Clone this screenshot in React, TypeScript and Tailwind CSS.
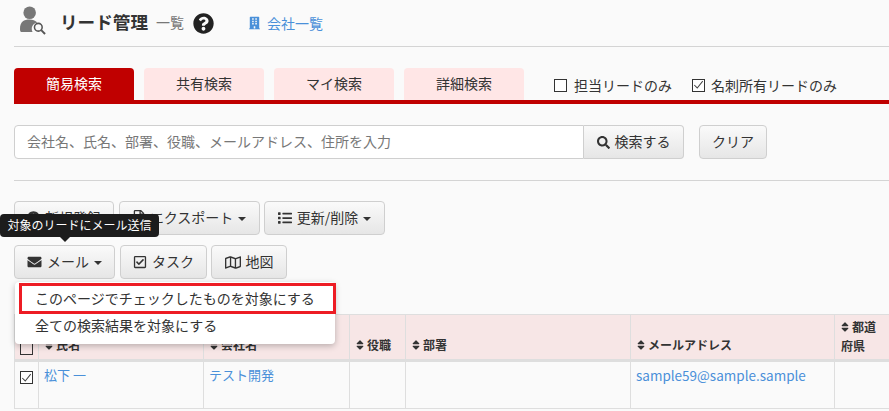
import { FaBuilding, FaEnvelope, FaList, FaQuestionCircle, FaRegCheckSquare, FaRegFileAlt, FaRegMap, FaSearch, FaSort, FaUserCircle } from "react-icons/fa";
import type { ReactNode } from "react";

const font = "font-['Noto_Sans_CJK_JP','Noto_Sans_CJK_SC',sans-serif]";

function Btn({ className = "", children }: { className?: string; children: ReactNode }) {
  return (
    <button className={`h-[34px] flex items-center justify-center gap-[5px] pb-[2px] rounded border border-[#cfcfcf] bg-gradient-to-b from-[#fafafa] to-[#e6e6e6] text-sm text-[#333] ${className}`}>
      {children}
    </button>
  );
}

function Caret() {
  return <span className="mt-[3px] border-x-4 border-x-transparent border-t-4 border-t-[#333]" />;
}

function Check({ checked }: { checked?: boolean }) {
  return (
    <span className="w-[13px] h-[13px] border border-[#333] bg-white flex items-center justify-center shrink-0">
      {checked && (
        <svg viewBox="0 0 13 13" className="w-[12px] h-[12px]">
          <path d="M1.5 6.5 L5 10 L11.5 2" fill="none" stroke="#444" strokeWidth="1.2" />
        </svg>
      )}
    </span>
  );
}

function Tab({ label, active }: { label: string; active?: boolean }) {
  return (
    <div className={`w-[120px] h-[32px] pb-[2px] rounded-t flex items-center justify-center text-sm ${active ? "bg-[#c00000] text-white" : "bg-[#ffe6e6] text-[#333]"}`}>
      {label}
    </div>
  );
}

function Sortable({ label }: { label: string }) {
  return (
    <span className="inline-flex items-center gap-[3px]">
      <FaSort className="w-[8px] h-[12px] text-[#333]" />
      {label}
    </span>
  );
}

const th = "border border-[#dedede] border-b-[3px] pl-[6px] pr-[2px] pb-[4px] text-left";

export default function App() {
  return (
    <div className={`w-[889px] h-[411px] overflow-hidden bg-[#fafafa] pl-[14px] ${font}`}>
      <div className="w-[875px]">
        <div className="h-[47px] flex items-center border-b border-[#d4d4d4]">
          <svg viewBox="0 0 28 30" className="w-[27px] h-[29px] ml-[6px] mt-[-6px]">
            <circle cx="10" cy="7" r="6.5" fill="#777" />
            <path d="M0 24 C0 16 4 14 10 14 C13 14 16 15 18 17 C13 18 11 22 13 27 L2 27 Q0 27 0 24 Z" fill="#777" />
            <circle cx="19" cy="22" r="4" fill="none" stroke="#555" strokeWidth="1.6" />
            <path d="M22 25 L26 29" stroke="#555" strokeWidth="2" />
          </svg>
          <span className="ml-[13px] text-[17.6px] font-bold text-[#333] pb-[2px]">リード管理</span>
          <span className="ml-[8px] text-[14px] text-[#777] pb-[1px]">一覧</span>
          <FaQuestionCircle className="ml-[9px] w-[21px] h-[21px] text-[#222]" />
          <FaBuilding className="ml-[35px] w-[11px] h-[14px] text-[#4a90d9]" />
          <span className="ml-[7px] text-sm text-[#4a90d9] pb-[1px]">会社一覧</span>
        </div>

        <div className="mt-[21px] h-[36px] flex border-b-4 border-[#c00000]">
          <div className="flex gap-[10px]">
            <Tab label="簡易検索" active />
            <Tab label="共有検索" />
            <Tab label="マイ検索" />
            <Tab label="詳細検索" />
          </div>
          <div className="flex items-center h-[32px] ml-[30px] text-sm text-[#333] pt-[2px]">
            <Check />
            <span className="ml-[7px]">担当リードのみ</span>
            <span className="ml-[20px]"><Check checked /></span>
            <span className="ml-[6px]">名刺所有リードのみ</span>
          </div>
        </div>

        <div className="mt-[21px] flex">
          <div className="w-[570px] h-[34px] flex items-center rounded-l border border-[#cfcfcf] bg-white pl-[12px] pb-[2px] text-sm text-[#777]">
            会社名、氏名、部署、役職、メールアドレス、住所を入力
          </div>
          <Btn className="w-[100px] rounded-l-none border-l-0">
            <FaSearch className="w-[13px] h-[13px] text-[#333] mt-[2px]" />
            検索する
          </Btn>
          <Btn className="w-[68px] ml-[15px]">クリア</Btn>
        </div>

        <div className="mt-[21px] border-t border-[#d4d4d4]" />

        <div className="mt-[20px] flex gap-[5px]">
          <Btn className="w-[100px]">
            <FaUserCircle className="w-[13px] h-[13px]" />
            新規登録
          </Btn>
          <Btn className="w-[141px]">
            <FaRegFileAlt className="w-[12px] h-[14px]" />
            エクスポート
            <Caret />
          </Btn>
          <Btn className="w-[121px] ml-[-1px]">
            <FaList className="w-[14px] h-[14px] mt-[2px]" />
            更新/削除
            <Caret />
          </Btn>
        </div>

        <div className="relative mt-[10px] flex gap-[5px]">
          <Btn className="w-[101px] from-[#e4e4e4] to-[#e4e4e4] border-[#c0c0c0]">
            <FaEnvelope className="w-[15px] h-[14px] mt-[2px]" />
            メール
            <Caret />
          </Btn>
          <Btn className="w-[87px]">
            <FaRegCheckSquare className="w-[14px] h-[14px] mt-[2px]" />
            タスク
          </Btn>
          <Btn className="w-[76px] ml-[-1px]">
            <FaRegMap className="w-[16px] h-[15px] mt-[2px]" />
            地図
          </Btn>

          <div className="absolute left-[-14px] top-[-31px] h-[23px] w-[159px] pb-[2px] rounded bg-[#1c1c1c] flex items-center justify-center text-xs text-white whitespace-nowrap">
            対象のリードにメール送信
            <span className="absolute left-[60px] bottom-[-5px] border-x-[5px] border-x-transparent border-t-[5px] border-t-[#1c1c1c]" />
          </div>

          <div className="absolute left-[1px] top-[37px] z-10 w-[320px] h-[62px] rounded bg-white shadow-[0_2px_6px_rgba(0,0,0,0.25)] text-sm text-[#333]">
            <div className="ml-[4px] w-[317px] h-[31px] pb-[2px] border-[3px] border-[#ed1c24] flex items-center pl-[13px] whitespace-nowrap relative top-[1px]">
              このページでチェックしたものを対象にする
            </div>
            <div className="pl-[20px] mt-[2px] whitespace-nowrap">全ての検索結果を対象にする</div>
          </div>
        </div>

        <table className="mt-[35px] w-[890px] table-fixed border-collapse text-[13px] text-[#333]">
          <colgroup>
            <col className="w-[24px]" />
            <col className="w-[165px]" />
            <col className="w-[146px]" />
            <col className="w-[56px]" />
            <col className="w-[225px]" />
            <col className="w-[204px]" />
            <col className="w-[70px]" />
          </colgroup>
          <thead>
            <tr className="h-[46px] bg-[#f7e6e6] text-[12px] font-bold align-bottom">
              <th className="border border-[#dedede] border-b-[3px] pl-[5px] pb-[4px]">
                <span className="block w-[13px] h-[13px] border border-[#333]" />
              </th>
              <th className={th}><Sortable label="氏名" /></th>
              <th className={th}><Sortable label="会社名" /></th>
              <th className={th}><Sortable label="役職" /></th>
              <th className={th}><Sortable label="部署" /></th>
              <th className={th}><Sortable label="メールアドレス" /></th>
              <th className={`${th} leading-[18px]`}><Sortable label="都道" /><br />府県</th>
            </tr>
          </thead>
          <tbody>
            <tr className="h-[48px] align-top text-[#4a90d9]">
              <td className="border border-[#dedede] px-[5px] pt-[9px]"><Check checked /></td>
              <td className="border border-[#dedede] px-[5px] pt-[3px]">松下 一</td>
              <td className="border border-[#dedede] px-[5px] pt-[3px]">テスト開発</td>
              <td className="border border-[#dedede]" />
              <td className="border border-[#dedede]" />
              <td className="border border-[#dedede] px-[5px] pt-[3px] text-[13.5px] whitespace-nowrap">sample59@sample.sample</td>
              <td className="border border-[#dedede]" />
            </tr>
          </tbody>
        </table>
      </div>
    </div>
  );
}
